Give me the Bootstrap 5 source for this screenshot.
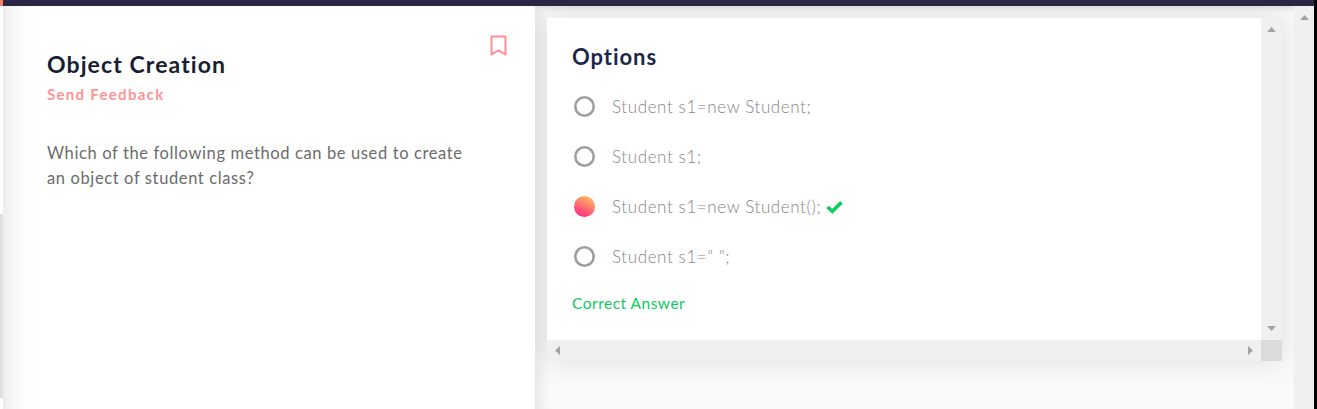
<!DOCTYPE html>
<html lang="en">
<head>
<meta charset="utf-8">
<meta name="viewport" content="width=device-width, initial-scale=1">
<title>Object Creation</title>
<link href="https://cdn.jsdelivr.net/npm/bootstrap@5.3.0/dist/css/bootstrap.min.css" rel="stylesheet">
<style>
body{font-family:Muli,Lato,sans-serif;background:#fff}
.app{height:409px}
.topbar{height:6px;background:#2b2645}
.topbar::before{content:"";display:block;width:3px;height:6px;background:#ff7a66}
.rail{width:3px;padding-top:208px}
.rail-thumb{height:184px;background:#e0e0e0}
.question{width:532px;padding:44px 28px 0 44px;background:linear-gradient(90deg,#ededed 0,#f3f3f3 7px,#fafafa 15px,#fff 32px)}
.title{font-size:23px;line-height:28px;font-weight:700;color:#172033;letter-spacing:1.1px}
.feedback{font-size:15px;line-height:20px;font-weight:700;color:#ff9494;letter-spacing:1.3px;margin-top:6px}
.prompt{font-size:16.5px;line-height:25px;color:#6b6b6b;letter-spacing:.62px;width:430px;margin-top:37px}
.flag{margin-top:-15px}
.answers{padding:12px 12px 0;overflow:hidden;background:#fafafa;box-shadow:inset 14px 0 12px -8px #e6e6e6,inset 0 6px 6px -4px #d8d8d8}
.options-box{height:343px;box-shadow:0 0 28px rgba(0,0,0,.12);background:#f0f0f0}
.options-body{height:322px;padding:24px 25px 0}
.options-title{font-size:22px;line-height:30px;font-weight:700;color:#1c2848;letter-spacing:.95px;margin-bottom:10px}
.option{height:50px;font-size:17px;line-height:26px;font-weight:300;color:#868686;letter-spacing:.6px;padding-left:2px}
.ring{margin:0 17px 2px 0}
.check{margin-left:5px}
.result{font-size:15.5px;line-height:22px;color:#0acb5c;letter-spacing:.5px;margin-top:10px}
.vbar{width:21px;padding:9px 0 9px}
.hbar{height:21px}
.corner{width:21px;background:#dbdbdb}
.page-scroll{width:20px;background:#f0f0f0;padding-top:9px}
.edge{width:3px;background:#000}
svg{display:block;flex-shrink:0}
</style>
<script src="https://cdn.jsdelivr.net/npm/bootstrap@5.3.0/dist/js/bootstrap.bundle.min.js"></script>
</head>
<body class="overflow-hidden">
<div class="app d-flex">
  <div class="d-flex flex-column flex-grow-1">
    <header class="topbar flex-shrink-0"></header>
    <div class="d-flex flex-grow-1">
      <div class="rail"><div class="rail-thumb"></div></div>
      <section class="question d-flex justify-content-between align-items-start">
        <div>
          <h1 class="title mb-0">Object Creation</h1>
          <div class="feedback">Send Feedback</div>
          <p class="prompt mb-0">Which of the following method can be used to create<br>an object of student class?</p>
        </div>
        <svg class="flag" width="17" height="22" viewBox="0 0 17 22"><path d="M1.5 1.5h14v18l-7-4.2-7 4.2z" fill="none" stroke="#ff8f8f" stroke-width="2" stroke-linejoin="round"/></svg>
      </section>
      <main class="answers flex-grow-1">
        <div class="options-box d-flex flex-column">
          <div class="d-flex">
            <div class="options-body flex-grow-1 bg-white">
              <h2 class="options-title">Options</h2>
              <div class="option d-flex align-items-center"><svg class="ring" width="21" height="21"><circle cx="10.5" cy="10.5" r="9.2" fill="none" stroke="#9e9e9e" stroke-width="2.6"/></svg><span>Student s1=new Student;</span></div>
              <div class="option d-flex align-items-center"><svg class="ring" width="21" height="21"><circle cx="10.5" cy="10.5" r="9.2" fill="none" stroke="#9e9e9e" stroke-width="2.6"/></svg><span>Student s1;</span></div>
              <div class="option d-flex align-items-center"><svg class="ring" width="21" height="21"><defs><linearGradient id="warm" x1=".25" y1="1" x2=".75" y2="0"><stop offset=".05" stop-color="#ff2d80"/><stop offset="1" stop-color="#ffc160"/></linearGradient></defs><circle cx="10.5" cy="10.5" r="10.5" fill="url(#warm)"/></svg><span>Student s1=new Student();</span>
                <svg class="check" width="17" height="14" viewBox="0 0 17 14"><path d="M1.5 7l4.8 4.3L15.5 2.4" fill="none" stroke="#0acf5f" stroke-width="3.6"/></svg></div>
              <div class="option d-flex align-items-center"><svg class="ring" width="21" height="21"><circle cx="10.5" cy="10.5" r="9.2" fill="none" stroke="#9e9e9e" stroke-width="2.6"/></svg><span>Student s1=" ";</span></div>
              <div class="result">Correct Answer</div>
            </div>
            <div class="vbar d-flex flex-column justify-content-between align-items-center">
              <svg width="9" height="5"><path d="M0 5 4.5 0 9 5z" fill="#a3a3a3"/></svg>
              <svg width="9" height="5"><path d="M0 0h9L4.5 5z" fill="#a3a3a3"/></svg>
            </div>
          </div>
          <div class="hbar d-flex">
            <div class="d-flex flex-grow-1 justify-content-between align-items-center px-2">
              <svg width="5" height="9"><path d="M5 0v9L0 4.5z" fill="#a3a3a3"/></svg>
              <svg width="5" height="9"><path d="M0 0v9l5-4.5z" fill="#a3a3a3"/></svg>
            </div>
            <div class="corner"></div>
          </div>
        </div>
      </main>
      <div class="page-scroll d-flex justify-content-center"><svg width="9" height="5"><path d="M0 5 4.5 0 9 5z" fill="#a3a3a3"/></svg></div>
    </div>
  </div>
  <div class="edge"></div>
</div>
</body>
</html>
